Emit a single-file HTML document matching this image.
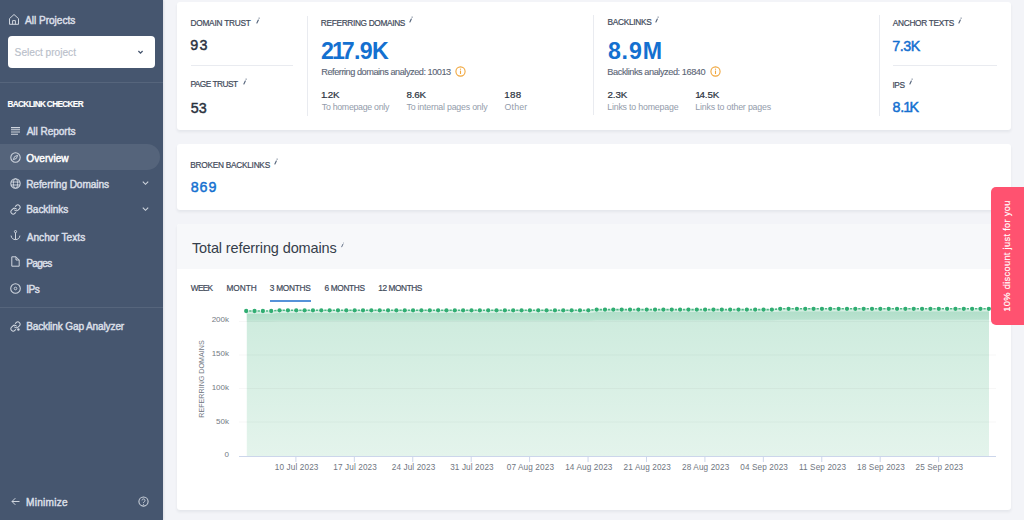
<!DOCTYPE html><html><head><meta charset="utf-8"><style>
*{margin:0;padding:0;box-sizing:border-box}
html,body{width:1024px;height:520px;overflow:hidden;background:#f3f4f8;font-family:"Liberation Sans",sans-serif}
.t{position:absolute;white-space:nowrap;line-height:1}
.abs{position:absolute}
</style></head><body>
<div class="abs" style="left:0;top:0;width:163px;height:520px;background:#46566f;box-shadow:1px 0 2px rgba(30,40,60,0.10)"></div>
<div class="abs" style="left:0;top:144px;width:160px;height:26px;background:#55647b;border-radius:0 13px 13px 0"></div>
<div class="abs" style="left:0;top:82px;width:163px;height:1px;background:#56657c"></div>
<div class="abs" style="left:0;top:306.5px;width:163px;height:1px;background:#56657c"></div>
<div class="abs" style="left:8px;top:36px;width:147px;height:32px;background:#fff;border-radius:4px"></div>
<svg class="abs" style="left:136.35px;top:48.2px" width="9" height="8" viewBox="0 0 9 8"><path d="M2.4 3 L4.5 5.1 L6.6 3" fill="none" stroke="#46566f" stroke-width="1.3"/></svg>
<svg class="abs" style="left:8px;top:13px" width="12" height="13" viewBox="0 0 12 13"><path d="M1.5 11.3 V5.6 L6 1.5 L10.5 5.6 V11.3 Z M4.6 11.3 V7.6 H7.4 V11.3" fill="none" stroke="#cfd5de" stroke-width="1.0" stroke-linejoin="round"/></svg>
<svg class="abs" style="left:10px;top:125.60px" width="11" height="11" viewBox="0 0 11 11"><path d="M1 1.6h9M1 3.8h9M1 6h9M1 8.2h7" stroke="#cfd5de" stroke-width="1.05" fill="none"/></svg>
<svg class="abs" style="left:10px;top:151.60px" width="11" height="11" viewBox="0 0 11 11"><circle cx="5.5" cy="5.5" r="4.7" stroke="#cfd5de" stroke-width="1.05" fill="none"/><path d="M7.7 3.3 L6.4 6.4 L3.3 7.7 L4.6 4.6 Z" stroke="#cfd5de" stroke-width="0.95" fill="none" stroke-linejoin="round"/></svg>
<svg class="abs" style="left:10px;top:177.90px" width="11" height="11" viewBox="0 0 11 11"><circle cx="5.5" cy="5.5" r="4.7" stroke="#cfd5de" stroke-width="1.05" fill="none"/><ellipse cx="5.5" cy="5.5" rx="2.1" ry="4.7" stroke="#cfd5de" stroke-width="0.95" fill="none"/><path d="M1 4h9M1 7h9" stroke="#cfd5de" stroke-width="0.95" fill="none"/></svg>
<svg class="abs" style="left:10px;top:203.50px" width="11" height="11" viewBox="0 0 11 11"><g transform="scale(0.4583)"><path d="M10 13a5 5 0 0 0 7.54.54l3-3a5 5 0 0 0-7.07-7.07l-1.72 1.71" stroke="#cfd5de" stroke-width="2.2" fill="none" stroke-linecap="round"/><path d="M14 11a5 5 0 0 0-7.54-.54l-3 3a5 5 0 0 0 7.07 7.07l1.71-1.71" stroke="#cfd5de" stroke-width="2.2" fill="none" stroke-linecap="round"/></g></svg>
<svg class="abs" style="left:10px;top:230.10px" width="11" height="11" viewBox="0 0 11 11"><circle cx="5.5" cy="1.6" r="1.1" stroke="#cfd5de" stroke-width="0.95" fill="none"/><path d="M5.5 2.7 V9.6 M1.1 5.6 c0.2 2.6 2 4 4.4 4 s4.2 -1.4 4.4 -4" stroke="#cfd5de" stroke-width="1.0" fill="none"/></svg>
<svg class="abs" style="left:10px;top:256.00px" width="11" height="11" viewBox="0 0 11 11"><path d="M1.8 0.8 H6 L9.2 4.0 V10.2 H1.8 Z M6 0.8 V4.0 H9.2" stroke="#cfd5de" stroke-width="1.0" fill="none" stroke-linejoin="round"/></svg>
<svg class="abs" style="left:10px;top:283.10px" width="11" height="11" viewBox="0 0 11 11"><circle cx="5.5" cy="5.5" r="4.8" stroke="#cfd5de" stroke-width="1.05" fill="none"/><circle cx="5.5" cy="5.5" r="1.3" stroke="#cfd5de" stroke-width="0.9" fill="none"/></svg>
<svg class="abs" style="left:10px;top:320.8px" width="11" height="11" viewBox="0 0 11 11"><g transform="scale(0.4583)"><path d="M10 13a5 5 0 0 0 7.54.54l3-3a5 5 0 0 0-7.07-7.07l-1.72 1.71" stroke="#cfd5de" stroke-width="2.2" fill="none" stroke-linecap="round"/><path d="M14 11a5 5 0 0 0-7.54-.54l-3 3a5 5 0 0 0 7.07 7.07l1.71-1.71" stroke="#cfd5de" stroke-width="2.2" fill="none" stroke-linecap="round"/></g></svg>
<svg class="abs" style="left:16px;top:327px" width="4" height="4" viewBox="0 0 4 4"><circle cx="2.4" cy="2.5" r="1.2" fill="#cfd5de"/></svg>
<svg class="abs" style="left:141px;top:179.30px" width="9" height="8" viewBox="0 0 9 8"><path d="M1.8 2.6 L4.5 5.3 L7.2 2.6" fill="none" stroke="#cfd5de" stroke-width="1.1"/></svg>
<svg class="abs" style="left:141px;top:205.30px" width="9" height="8" viewBox="0 0 9 8"><path d="M1.8 2.6 L4.5 5.3 L7.2 2.6" fill="none" stroke="#cfd5de" stroke-width="1.1"/></svg>
<svg class="abs" style="left:10px;top:496px" width="11" height="11" viewBox="0 0 11 11"><path d="M9.5 5.5 H2 M5.3 2.2 L2 5.5 L5.3 8.8" stroke="#cfd5de" stroke-width="1.0" fill="none"/></svg>
<svg class="abs" style="left:138.2px;top:495.7px" width="11" height="11" viewBox="0 0 11 11"><circle cx="5.5" cy="5.5" r="4.6" stroke="#cfd5de" stroke-width="1.05" fill="none"/><path d="M4.0 4.4 a1.5 1.5 0 1 1 2.3 1.3 c-0.6 0.35 -0.8 0.7 -0.8 1.3" stroke="#cfd5de" stroke-width="0.95" fill="none"/><circle cx="5.5" cy="8.2" r="0.55" fill="#cfd5de"/></svg>
<div class="abs" style="left:177px;top:2px;width:834px;height:128px;background:#fff;border-radius:3px;box-shadow:0 2px 3px rgba(40,50,75,0.07)"></div>
<div class="abs" style="left:177px;top:144px;width:834px;height:66px;background:#fff;border-radius:3px;box-shadow:0 2px 3px rgba(40,50,75,0.07)"></div>
<div class="abs" style="left:177px;top:224px;width:834px;height:285.5px;background:#fff;border-radius:3px;box-shadow:0 2px 3px rgba(40,50,75,0.07);overflow:hidden"><div class="abs" style="left:0;top:0;width:834px;height:44.5px;background:#f7f8fa"></div></div>
<div class="abs" style="left:191px;top:65px;width:102px;height:1px;background:#e9ebf0"></div>
<div class="abs" style="left:307px;top:16px;width:1px;height:100px;background:#e9ebf0"></div>
<div class="abs" style="left:593px;top:15px;width:1px;height:100px;background:#e9ebf0"></div>
<div class="abs" style="left:879px;top:15px;width:1px;height:101px;background:#e9ebf0"></div>
<div class="abs" style="left:893px;top:65px;width:104px;height:1px;background:#e9ebf0"></div>
<div class="abs" style="left:270px;top:299.5px;width:41px;height:2px;background:#5592d9"></div>
<svg class="abs" style="left:255.70px;top:16.50px" width="4.0" height="7.0" viewBox="0 0 4 7"><path d="M0.9 6.0 L2.3 3.0" stroke="#56657c" stroke-width="1.15" stroke-linecap="round" fill="none"/><circle cx="3.1" cy="1.1" r="0.62" fill="#56657c"/></svg>
<svg class="abs" style="left:242.70px;top:78.00px" width="4.0" height="7.0" viewBox="0 0 4 7"><path d="M0.9 6.0 L2.3 3.0" stroke="#56657c" stroke-width="1.15" stroke-linecap="round" fill="none"/><circle cx="3.1" cy="1.1" r="0.62" fill="#56657c"/></svg>
<svg class="abs" style="left:409.00px;top:16.10px" width="4.0" height="7.0" viewBox="0 0 4 7"><path d="M0.9 6.0 L2.3 3.0" stroke="#56657c" stroke-width="1.15" stroke-linecap="round" fill="none"/><circle cx="3.1" cy="1.1" r="0.62" fill="#56657c"/></svg>
<svg class="abs" style="left:655.10px;top:16.20px" width="4.0" height="7.0" viewBox="0 0 4 7"><path d="M0.9 6.0 L2.3 3.0" stroke="#56657c" stroke-width="1.15" stroke-linecap="round" fill="none"/><circle cx="3.1" cy="1.1" r="0.62" fill="#56657c"/></svg>
<svg class="abs" style="left:957.70px;top:17.00px" width="4.0" height="7.0" viewBox="0 0 4 7"><path d="M0.9 6.0 L2.3 3.0" stroke="#56657c" stroke-width="1.15" stroke-linecap="round" fill="none"/><circle cx="3.1" cy="1.1" r="0.62" fill="#56657c"/></svg>
<svg class="abs" style="left:908.70px;top:78.30px" width="4.0" height="7.0" viewBox="0 0 4 7"><path d="M0.9 6.0 L2.3 3.0" stroke="#56657c" stroke-width="1.15" stroke-linecap="round" fill="none"/><circle cx="3.1" cy="1.1" r="0.62" fill="#56657c"/></svg>
<svg class="abs" style="left:273.60px;top:158.30px" width="4.0" height="7.0" viewBox="0 0 4 7"><path d="M0.9 6.0 L2.3 3.0" stroke="#56657c" stroke-width="1.15" stroke-linecap="round" fill="none"/><circle cx="3.1" cy="1.1" r="0.62" fill="#56657c"/></svg>
<svg class="abs" style="left:341.00px;top:242.20px" width="3.2" height="5.6" viewBox="0 0 4 7"><path d="M0.9 6.0 L2.3 3.0" stroke="#56657c" stroke-width="1.15" stroke-linecap="round" fill="none"/><circle cx="3.1" cy="1.1" r="0.62" fill="#56657c"/></svg>
<svg class="abs" style="left:454.5px;top:65.7px" width="11" height="11" viewBox="0 0 11 11"><circle cx="5.5" cy="5.5" r="4.6" stroke="#f0a63c" stroke-width="1.1" fill="none"/><path d="M5.5 4.6 V8" stroke="#f0a63c" stroke-width="1.1"/><circle cx="5.5" cy="3.2" r="0.6" fill="#f0a63c"/></svg>
<svg class="abs" style="left:709.5px;top:65.7px" width="11" height="11" viewBox="0 0 11 11"><circle cx="5.5" cy="5.5" r="4.6" stroke="#f0a63c" stroke-width="1.1" fill="none"/><path d="M5.5 4.6 V8" stroke="#f0a63c" stroke-width="1.1"/><circle cx="5.5" cy="3.2" r="0.6" fill="#f0a63c"/></svg>
<div class="t" id="selproj" style="left:14.62px;top:48.12px;font-size:10.2px;font-weight:400;color:#b9c0ca;letter-spacing:-0.024px;-webkit-text-stroke:0.15px #b9c0ca">Select project</div>
<div class="t" id="allproj" style="left:25.00px;top:15.77px;font-size:10.1px;font-weight:400;color:#dadfe7;letter-spacing:-0.023px;-webkit-text-stroke:0.45px #dadfe7">All Projects</div>
<div class="t" id="bc" style="left:7.54px;top:100.72px;font-size:8.2px;font-weight:700;color:#ffffff;letter-spacing:-0.633px;-webkit-text-stroke:0.15px #ffffff">BACKLINK CHECKER</div>
<div class="t" id="m0" style="left:26.68px;top:127.02px;font-size:10.1px;font-weight:400;color:#dadfe7;letter-spacing:-0.061px;-webkit-text-stroke:0.45px #dadfe7">All Reports</div>
<div class="t" id="m1" style="left:26.36px;top:153.60px;font-size:10.1px;font-weight:400;color:#ffffff;letter-spacing:0.029px;-webkit-text-stroke:0.45px #ffffff">Overview</div>
<div class="t" id="m2" style="left:26.15px;top:179.67px;font-size:10.1px;font-weight:400;color:#dadfe7;letter-spacing:-0.080px;-webkit-text-stroke:0.45px #dadfe7">Referring Domains</div>
<div class="t" id="m3" style="left:26.13px;top:205.44px;font-size:10.1px;font-weight:400;color:#dadfe7;letter-spacing:-0.048px;-webkit-text-stroke:0.45px #dadfe7">Backlinks</div>
<div class="t" id="m4" style="left:26.68px;top:232.60px;font-size:10.1px;font-weight:400;color:#dadfe7;letter-spacing:0.033px;-webkit-text-stroke:0.45px #dadfe7">Anchor Texts</div>
<div class="t" id="m5" style="left:26.15px;top:258.63px;font-size:10.1px;font-weight:400;color:#dadfe7;letter-spacing:-0.601px;-webkit-text-stroke:0.45px #dadfe7">Pages</div>
<div class="t" id="m6" style="left:26.14px;top:285.08px;font-size:10.1px;font-weight:400;color:#dadfe7;letter-spacing:-0.504px;-webkit-text-stroke:0.45px #dadfe7">IPs</div>
<div class="t" id="gap" style="left:26.16px;top:321.89px;font-size:10.1px;font-weight:400;color:#dadfe7;letter-spacing:-0.146px;-webkit-text-stroke:0.45px #dadfe7">Backlink Gap Analyzer</div>
<div class="t" id="min" style="left:26.10px;top:498.29px;font-size:10.1px;font-weight:400;color:#dadfe7;letter-spacing:0.255px;-webkit-text-stroke:0.45px #dadfe7">Minimize</div>
<div class="t" id="dt" style="left:190.44px;top:18.68px;font-size:8.3px;font-weight:400;color:#3f4a5a;letter-spacing:-0.235px;-webkit-text-stroke:0.2px #3f4a5a">DOMAIN TRUST</div>
<div class="t" id="n93" style="left:190.37px;top:38.46px;font-size:14.3px;font-weight:400;color:#2a323e;letter-spacing:1.265px;-webkit-text-stroke:0.45px #2a323e">93</div>
<div class="t" id="pt" style="left:190.43px;top:80.38px;font-size:8.3px;font-weight:400;color:#3f4a5a;letter-spacing:-0.500px;-webkit-text-stroke:0.2px #3f4a5a">PAGE TRUST</div>
<div class="t" id="n53" style="left:190.71px;top:100.57px;font-size:14.3px;font-weight:400;color:#2a323e;letter-spacing:0.000px;-webkit-text-stroke:0.45px #2a323e">53</div>
<div class="t" id="rd" style="left:320.87px;top:18.68px;font-size:8.3px;font-weight:400;color:#3f4a5a;letter-spacing:-0.338px;-webkit-text-stroke:0.2px #3f4a5a">REFERRING DOMAINS</div>
<div class="t" id="n217" style="left:321.10px;top:39.54px;font-size:23.2px;font-weight:700;color:#1470d0;letter-spacing:-0.605px;">2<span style="margin-left:-1.5px;margin-right:-2.5px">1</span>7.9K</div>
<div class="t" id="rda" style="left:321.33px;top:67.79px;font-size:9.2px;font-weight:400;color:#5c6676;letter-spacing:-0.474px;-webkit-text-stroke:0.12px #5c6676">Referring domains analyzed: 10013</div>
<div class="t" id="n12" style="left:321.11px;top:89.68px;font-size:9.8px;font-weight:400;color:#2a323e;letter-spacing:-0.149px;-webkit-text-stroke:0.2px #2a323e"><span style="margin-right:-1.2px">1</span>.2K</div>
<div class="t" id="thp" style="left:321.79px;top:103.29px;font-size:8.8px;font-weight:400;color:#939cab;letter-spacing:-0.291px;">To homepage only</div>
<div class="t" id="n86" style="left:406.47px;top:90.16px;font-size:9.8px;font-weight:400;color:#2a323e;letter-spacing:-0.155px;-webkit-text-stroke:0.2px #2a323e">8.6K</div>
<div class="t" id="tip" style="left:406.48px;top:103.32px;font-size:8.8px;font-weight:400;color:#939cab;letter-spacing:-0.209px;">To internal pages only</div>
<div class="t" id="n188" style="left:504.35px;top:89.75px;font-size:9.8px;font-weight:400;color:#2a323e;letter-spacing:0.193px;-webkit-text-stroke:0.2px #2a323e">188</div>
<div class="t" id="oth" style="left:504.47px;top:103.30px;font-size:8.8px;font-weight:400;color:#939cab;letter-spacing:0.204px;">Other</div>
<div class="t" id="bl" style="left:607.43px;top:18.39px;font-size:8.3px;font-weight:400;color:#3f4a5a;letter-spacing:-0.263px;-webkit-text-stroke:0.2px #3f4a5a">BACKLINKS</div>
<div class="t" id="n89" style="left:607.89px;top:39.54px;font-size:23.2px;font-weight:700;color:#1470d0;letter-spacing:0.853px;">8.9M</div>
<div class="t" id="bla" style="left:607.36px;top:67.57px;font-size:9.2px;font-weight:400;color:#5c6676;letter-spacing:-0.438px;-webkit-text-stroke:0.12px #5c6676">Backlinks analyzed: 16840</div>
<div class="t" id="n23" style="left:607.53px;top:90.35px;font-size:9.8px;font-weight:400;color:#2a323e;letter-spacing:-0.093px;-webkit-text-stroke:0.2px #2a323e">2.3K</div>
<div class="t" id="lth" style="left:607.20px;top:103.31px;font-size:8.8px;font-weight:400;color:#939cab;letter-spacing:-0.183px;">Links to homepage</div>
<div class="t" id="n145" style="left:695.20px;top:90.06px;font-size:9.8px;font-weight:400;color:#2a323e;letter-spacing:-0.117px;-webkit-text-stroke:0.2px #2a323e"><span style="margin-right:-1px">1</span>4.5K</div>
<div class="t" id="lto" style="left:695.20px;top:103.46px;font-size:8.8px;font-weight:400;color:#939cab;letter-spacing:-0.170px;">Links to other pages</div>
<div class="t" id="at" style="left:892.75px;top:18.98px;font-size:8.3px;font-weight:400;color:#3f4a5a;letter-spacing:-0.296px;-webkit-text-stroke:0.2px #3f4a5a">ANCHOR TEXTS</div>
<div class="t" id="n73" style="left:892.23px;top:38.52px;font-size:14.3px;font-weight:400;color:#1470d0;letter-spacing:-0.470px;-webkit-text-stroke:0.45px #1470d0">7.3K</div>
<div class="t" id="ips" style="left:892.49px;top:80.98px;font-size:8.3px;font-weight:400;color:#3f4a5a;letter-spacing:-0.459px;-webkit-text-stroke:0.2px #3f4a5a">IPS</div>
<div class="t" id="n81" style="left:892.41px;top:100.26px;font-size:14.3px;font-weight:400;color:#1470d0;letter-spacing:-0.177px;-webkit-text-stroke:0.45px #1470d0">8.<span style="margin-left:-0.8px;margin-right:-1.6px">1</span>K</div>
<div class="t" id="bb" style="left:190.36px;top:160.83px;font-size:8.3px;font-weight:400;color:#3f4a5a;letter-spacing:-0.274px;-webkit-text-stroke:0.2px #3f4a5a">BROKEN BACKLINKS</div>
<div class="t" id="n869" style="left:190.75px;top:180.25px;font-size:14.3px;font-weight:400;color:#1470d0;letter-spacing:0.886px;-webkit-text-stroke:0.45px #1470d0">869</div>
<div class="t" id="title" style="left:191.91px;top:240.81px;font-size:14.5px;font-weight:400;color:#353e4b;letter-spacing:-0.118px;">Total referring domains</div>
<div class="t" id="tw" style="left:190.83px;top:283.89px;font-size:8.3px;font-weight:400;color:#3f4a5a;letter-spacing:-0.710px;-webkit-text-stroke:0.2px #3f4a5a">WEEK</div>
<div class="t" id="tm" style="left:226.50px;top:283.98px;font-size:8.3px;font-weight:400;color:#3f4a5a;letter-spacing:-0.061px;-webkit-text-stroke:0.2px #3f4a5a">MONTH</div>
<div class="t" id="t3" style="left:269.86px;top:283.98px;font-size:8.3px;font-weight:400;color:#3f4a5a;letter-spacing:-0.277px;-webkit-text-stroke:0.2px #3f4a5a">3 MONTHS</div>
<div class="t" id="t6" style="left:324.43px;top:283.98px;font-size:8.3px;font-weight:400;color:#3f4a5a;letter-spacing:-0.327px;-webkit-text-stroke:0.2px #3f4a5a">6 MONTHS</div>
<div class="t" id="t12" style="left:378.32px;top:283.96px;font-size:8.3px;font-weight:400;color:#3f4a5a;letter-spacing:-0.428px;-webkit-text-stroke:0.2px #3f4a5a">12 MONTHS</div>
<svg class="abs" style="left:0;top:0" width="1024" height="520" viewBox="0 0 1024 520"><defs><linearGradient id="g" x1="0" y1="0" x2="0" y2="1"><stop offset="0" stop-color="#cdebdd"/><stop offset="1" stop-color="#e4f4ec"/></linearGradient><linearGradient id="bandg" x1="0" y1="0" x2="0" y2="1"><stop offset="0" stop-color="#acdcc6" stop-opacity="0.85"/><stop offset="0.75" stop-color="#acdcc6" stop-opacity="0.6"/><stop offset="1" stop-color="#acdcc6" stop-opacity="0.1"/></linearGradient></defs><polygon points="246.8,456 246.8,313.50 246.20,313.50 254.54,313.50 262.89,313.50 271.23,313.50 279.58,312.80 287.92,312.80 296.26,312.80 304.61,312.80 312.95,312.80 321.30,312.80 329.64,312.80 337.98,312.80 346.33,312.80 354.67,312.80 363.02,312.80 371.36,312.80 379.70,312.80 388.05,312.80 396.39,312.80 404.74,312.80 413.08,312.80 421.42,312.80 429.77,312.80 438.11,312.80 446.46,312.80 454.80,312.80 463.14,312.80 471.49,312.80 479.83,312.80 488.18,312.80 496.52,312.80 504.86,312.80 513.21,312.80 521.55,312.80 529.90,312.80 538.24,312.80 546.58,312.80 554.93,312.80 563.27,312.80 571.62,312.80 579.96,312.80 588.30,312.80 596.65,312.10 604.99,312.10 613.34,312.10 621.68,312.10 630.02,312.10 638.37,312.10 646.71,312.10 655.06,312.10 663.40,312.10 671.74,312.10 680.09,312.10 688.43,312.10 696.78,312.10 705.12,312.10 713.46,312.10 721.81,312.10 730.15,312.10 738.50,312.10 746.84,312.10 755.18,312.10 763.53,312.10 771.87,312.10 780.22,311.30 788.56,311.30 796.90,311.30 805.25,311.30 813.59,311.30 821.94,311.30 830.28,311.30 838.62,311.30 846.97,311.30 855.31,311.30 863.66,311.30 872.00,311.30 880.34,311.30 888.69,311.30 897.03,311.30 905.38,311.30 913.72,311.30 922.06,311.30 930.41,311.30 938.75,311.30 947.10,311.30 955.44,311.30 963.78,311.30 972.13,311.30 980.47,311.30 988.82,311.30 989,311.30 989,456" fill="url(#g)"/><polygon points="246.8,313.50 246.20,313.50 254.54,313.50 262.89,313.50 271.23,313.50 279.58,312.80 287.92,312.80 296.26,312.80 304.61,312.80 312.95,312.80 321.30,312.80 329.64,312.80 337.98,312.80 346.33,312.80 354.67,312.80 363.02,312.80 371.36,312.80 379.70,312.80 388.05,312.80 396.39,312.80 404.74,312.80 413.08,312.80 421.42,312.80 429.77,312.80 438.11,312.80 446.46,312.80 454.80,312.80 463.14,312.80 471.49,312.80 479.83,312.80 488.18,312.80 496.52,312.80 504.86,312.80 513.21,312.80 521.55,312.80 529.90,312.80 538.24,312.80 546.58,312.80 554.93,312.80 563.27,312.80 571.62,312.80 579.96,312.80 588.30,312.80 596.65,312.10 604.99,312.10 613.34,312.10 621.68,312.10 630.02,312.10 638.37,312.10 646.71,312.10 655.06,312.10 663.40,312.10 671.74,312.10 680.09,312.10 688.43,312.10 696.78,312.10 705.12,312.10 713.46,312.10 721.81,312.10 730.15,312.10 738.50,312.10 746.84,312.10 755.18,312.10 763.53,312.10 771.87,312.10 780.22,311.30 788.56,311.30 796.90,311.30 805.25,311.30 813.59,311.30 821.94,311.30 830.28,311.30 838.62,311.30 846.97,311.30 855.31,311.30 863.66,311.30 872.00,311.30 880.34,311.30 888.69,311.30 897.03,311.30 905.38,311.30 913.72,311.30 922.06,311.30 930.41,311.30 938.75,311.30 947.10,311.30 955.44,311.30 963.78,311.30 972.13,311.30 980.47,311.30 988.82,311.30 989,311.30 989,319.80 988.82,319.80 980.47,319.80 972.13,319.80 963.78,319.80 955.44,319.80 947.10,319.80 938.75,319.80 930.41,319.80 922.06,319.80 913.72,319.80 905.38,319.80 897.03,319.80 888.69,319.80 880.34,319.80 872.00,319.80 863.66,319.80 855.31,319.80 846.97,319.80 838.62,319.80 830.28,319.80 821.94,319.80 813.59,319.80 805.25,319.80 796.90,319.80 788.56,319.80 780.22,319.80 771.87,320.60 763.53,320.60 755.18,320.60 746.84,320.60 738.50,320.60 730.15,320.60 721.81,320.60 713.46,320.60 705.12,320.60 696.78,320.60 688.43,320.60 680.09,320.60 671.74,320.60 663.40,320.60 655.06,320.60 646.71,320.60 638.37,320.60 630.02,320.60 621.68,320.60 613.34,320.60 604.99,320.60 596.65,320.60 588.30,321.30 579.96,321.30 571.62,321.30 563.27,321.30 554.93,321.30 546.58,321.30 538.24,321.30 529.90,321.30 521.55,321.30 513.21,321.30 504.86,321.30 496.52,321.30 488.18,321.30 479.83,321.30 471.49,321.30 463.14,321.30 454.80,321.30 446.46,321.30 438.11,321.30 429.77,321.30 421.42,321.30 413.08,321.30 404.74,321.30 396.39,321.30 388.05,321.30 379.70,321.30 371.36,321.30 363.02,321.30 354.67,321.30 346.33,321.30 337.98,321.30 329.64,321.30 321.30,321.30 312.95,321.30 304.61,321.30 296.26,321.30 287.92,321.30 279.58,321.30 271.23,322.00 262.89,322.00 254.54,322.00 246.20,322.00 246.8,322.00" fill="url(#bandg)"/><polygon points="246.8,311.50 246.20,311.50 254.54,311.50 262.89,311.50 271.23,311.50 279.58,310.80 287.92,310.80 296.26,310.80 304.61,310.80 312.95,310.80 321.30,310.80 329.64,310.80 337.98,310.80 346.33,310.80 354.67,310.80 363.02,310.80 371.36,310.80 379.70,310.80 388.05,310.80 396.39,310.80 404.74,310.80 413.08,310.80 421.42,310.80 429.77,310.80 438.11,310.80 446.46,310.80 454.80,310.80 463.14,310.80 471.49,310.80 479.83,310.80 488.18,310.80 496.52,310.80 504.86,310.80 513.21,310.80 521.55,310.80 529.90,310.80 538.24,310.80 546.58,310.80 554.93,310.80 563.27,310.80 571.62,310.80 579.96,310.80 588.30,310.80 596.65,310.10 604.99,310.10 613.34,310.10 621.68,310.10 630.02,310.10 638.37,310.10 646.71,310.10 655.06,310.10 663.40,310.10 671.74,310.10 680.09,310.10 688.43,310.10 696.78,310.10 705.12,310.10 713.46,310.10 721.81,310.10 730.15,310.10 738.50,310.10 746.84,310.10 755.18,310.10 763.53,310.10 771.87,310.10 780.22,309.30 788.56,309.30 796.90,309.30 805.25,309.30 813.59,309.30 821.94,309.30 830.28,309.30 838.62,309.30 846.97,309.30 855.31,309.30 863.66,309.30 872.00,309.30 880.34,309.30 888.69,309.30 897.03,309.30 905.38,309.30 913.72,309.30 922.06,309.30 930.41,309.30 938.75,309.30 947.10,309.30 955.44,309.30 963.78,309.30 972.13,309.30 980.47,309.30 988.82,309.30 989,309.30 989,311.30 988.82,311.30 980.47,311.30 972.13,311.30 963.78,311.30 955.44,311.30 947.10,311.30 938.75,311.30 930.41,311.30 922.06,311.30 913.72,311.30 905.38,311.30 897.03,311.30 888.69,311.30 880.34,311.30 872.00,311.30 863.66,311.30 855.31,311.30 846.97,311.30 838.62,311.30 830.28,311.30 821.94,311.30 813.59,311.30 805.25,311.30 796.90,311.30 788.56,311.30 780.22,311.30 771.87,312.10 763.53,312.10 755.18,312.10 746.84,312.10 738.50,312.10 730.15,312.10 721.81,312.10 713.46,312.10 705.12,312.10 696.78,312.10 688.43,312.10 680.09,312.10 671.74,312.10 663.40,312.10 655.06,312.10 646.71,312.10 638.37,312.10 630.02,312.10 621.68,312.10 613.34,312.10 604.99,312.10 596.65,312.10 588.30,312.80 579.96,312.80 571.62,312.80 563.27,312.80 554.93,312.80 546.58,312.80 538.24,312.80 529.90,312.80 521.55,312.80 513.21,312.80 504.86,312.80 496.52,312.80 488.18,312.80 479.83,312.80 471.49,312.80 463.14,312.80 454.80,312.80 446.46,312.80 438.11,312.80 429.77,312.80 421.42,312.80 413.08,312.80 404.74,312.80 396.39,312.80 388.05,312.80 379.70,312.80 371.36,312.80 363.02,312.80 354.67,312.80 346.33,312.80 337.98,312.80 329.64,312.80 321.30,312.80 312.95,312.80 304.61,312.80 296.26,312.80 287.92,312.80 279.58,312.80 271.23,313.50 262.89,313.50 254.54,313.50 246.20,313.50 246.8,313.50" fill="#d6eee3"/><line x1="239" y1="321.5" x2="996" y2="321.5" stroke="#000" stroke-width="1" opacity="0.028"/><line x1="239" y1="355" x2="996" y2="355" stroke="#000" stroke-width="1" opacity="0.028"/><line x1="239" y1="388.5" x2="996" y2="388.5" stroke="#000" stroke-width="1" opacity="0.028"/><line x1="239" y1="422" x2="996" y2="422" stroke="#000" stroke-width="1" opacity="0.028"/><polyline points="246.20,311.00 254.54,311.00 262.89,311.00 271.23,311.00 279.58,310.30 287.92,310.30 296.26,310.30 304.61,310.30 312.95,310.30 321.30,310.30 329.64,310.30 337.98,310.30 346.33,310.30 354.67,310.30 363.02,310.30 371.36,310.30 379.70,310.30 388.05,310.30 396.39,310.30 404.74,310.30 413.08,310.30 421.42,310.30 429.77,310.30 438.11,310.30 446.46,310.30 454.80,310.30 463.14,310.30 471.49,310.30 479.83,310.30 488.18,310.30 496.52,310.30 504.86,310.30 513.21,310.30 521.55,310.30 529.90,310.30 538.24,310.30 546.58,310.30 554.93,310.30 563.27,310.30 571.62,310.30 579.96,310.30 588.30,310.30 596.65,309.60 604.99,309.60 613.34,309.60 621.68,309.60 630.02,309.60 638.37,309.60 646.71,309.60 655.06,309.60 663.40,309.60 671.74,309.60 680.09,309.60 688.43,309.60 696.78,309.60 705.12,309.60 713.46,309.60 721.81,309.60 730.15,309.60 738.50,309.60 746.84,309.60 755.18,309.60 763.53,309.60 771.87,309.60 780.22,308.80 788.56,308.80 796.90,308.80 805.25,308.80 813.59,308.80 821.94,308.80 830.28,308.80 838.62,308.80 846.97,308.80 855.31,308.80 863.66,308.80 872.00,308.80 880.34,308.80 888.69,308.80 897.03,308.80 905.38,308.80 913.72,308.80 922.06,308.80 930.41,308.80 938.75,308.80 947.10,308.80 955.44,308.80 963.78,308.80 972.13,308.80 980.47,308.80 988.82,308.80" fill="none" stroke="#4cb884" stroke-width="1.6" stroke-dasharray="2.4 5.944" stroke-dashoffset="5.372"/><circle cx="246.20" cy="311.00" r="2.15" fill="#30ad72"/><circle cx="254.54" cy="311.00" r="2.15" fill="#30ad72"/><circle cx="262.89" cy="311.00" r="2.15" fill="#30ad72"/><circle cx="271.23" cy="311.00" r="2.15" fill="#30ad72"/><circle cx="279.58" cy="310.30" r="2.15" fill="#30ad72"/><circle cx="287.92" cy="310.30" r="2.15" fill="#30ad72"/><circle cx="296.26" cy="310.30" r="2.15" fill="#30ad72"/><circle cx="304.61" cy="310.30" r="2.15" fill="#30ad72"/><circle cx="312.95" cy="310.30" r="2.15" fill="#30ad72"/><circle cx="321.30" cy="310.30" r="2.15" fill="#30ad72"/><circle cx="329.64" cy="310.30" r="2.15" fill="#30ad72"/><circle cx="337.98" cy="310.30" r="2.15" fill="#30ad72"/><circle cx="346.33" cy="310.30" r="2.15" fill="#30ad72"/><circle cx="354.67" cy="310.30" r="2.15" fill="#30ad72"/><circle cx="363.02" cy="310.30" r="2.15" fill="#30ad72"/><circle cx="371.36" cy="310.30" r="2.15" fill="#30ad72"/><circle cx="379.70" cy="310.30" r="2.15" fill="#30ad72"/><circle cx="388.05" cy="310.30" r="2.15" fill="#30ad72"/><circle cx="396.39" cy="310.30" r="2.15" fill="#30ad72"/><circle cx="404.74" cy="310.30" r="2.15" fill="#30ad72"/><circle cx="413.08" cy="310.30" r="2.15" fill="#30ad72"/><circle cx="421.42" cy="310.30" r="2.15" fill="#30ad72"/><circle cx="429.77" cy="310.30" r="2.15" fill="#30ad72"/><circle cx="438.11" cy="310.30" r="2.15" fill="#30ad72"/><circle cx="446.46" cy="310.30" r="2.15" fill="#30ad72"/><circle cx="454.80" cy="310.30" r="2.15" fill="#30ad72"/><circle cx="463.14" cy="310.30" r="2.15" fill="#30ad72"/><circle cx="471.49" cy="310.30" r="2.15" fill="#30ad72"/><circle cx="479.83" cy="310.30" r="2.15" fill="#30ad72"/><circle cx="488.18" cy="310.30" r="2.15" fill="#30ad72"/><circle cx="496.52" cy="310.30" r="2.15" fill="#30ad72"/><circle cx="504.86" cy="310.30" r="2.15" fill="#30ad72"/><circle cx="513.21" cy="310.30" r="2.15" fill="#30ad72"/><circle cx="521.55" cy="310.30" r="2.15" fill="#30ad72"/><circle cx="529.90" cy="310.30" r="2.15" fill="#30ad72"/><circle cx="538.24" cy="310.30" r="2.15" fill="#30ad72"/><circle cx="546.58" cy="310.30" r="2.15" fill="#30ad72"/><circle cx="554.93" cy="310.30" r="2.15" fill="#30ad72"/><circle cx="563.27" cy="310.30" r="2.15" fill="#30ad72"/><circle cx="571.62" cy="310.30" r="2.15" fill="#30ad72"/><circle cx="579.96" cy="310.30" r="2.15" fill="#30ad72"/><circle cx="588.30" cy="310.30" r="2.15" fill="#30ad72"/><circle cx="596.65" cy="309.60" r="2.15" fill="#30ad72"/><circle cx="604.99" cy="309.60" r="2.15" fill="#30ad72"/><circle cx="613.34" cy="309.60" r="2.15" fill="#30ad72"/><circle cx="621.68" cy="309.60" r="2.15" fill="#30ad72"/><circle cx="630.02" cy="309.60" r="2.15" fill="#30ad72"/><circle cx="638.37" cy="309.60" r="2.15" fill="#30ad72"/><circle cx="646.71" cy="309.60" r="2.15" fill="#30ad72"/><circle cx="655.06" cy="309.60" r="2.15" fill="#30ad72"/><circle cx="663.40" cy="309.60" r="2.15" fill="#30ad72"/><circle cx="671.74" cy="309.60" r="2.15" fill="#30ad72"/><circle cx="680.09" cy="309.60" r="2.15" fill="#30ad72"/><circle cx="688.43" cy="309.60" r="2.15" fill="#30ad72"/><circle cx="696.78" cy="309.60" r="2.15" fill="#30ad72"/><circle cx="705.12" cy="309.60" r="2.15" fill="#30ad72"/><circle cx="713.46" cy="309.60" r="2.15" fill="#30ad72"/><circle cx="721.81" cy="309.60" r="2.15" fill="#30ad72"/><circle cx="730.15" cy="309.60" r="2.15" fill="#30ad72"/><circle cx="738.50" cy="309.60" r="2.15" fill="#30ad72"/><circle cx="746.84" cy="309.60" r="2.15" fill="#30ad72"/><circle cx="755.18" cy="309.60" r="2.15" fill="#30ad72"/><circle cx="763.53" cy="309.60" r="2.15" fill="#30ad72"/><circle cx="771.87" cy="309.60" r="2.15" fill="#30ad72"/><circle cx="780.22" cy="308.80" r="2.15" fill="#30ad72"/><circle cx="788.56" cy="308.80" r="2.15" fill="#30ad72"/><circle cx="796.90" cy="308.80" r="2.15" fill="#30ad72"/><circle cx="805.25" cy="308.80" r="2.15" fill="#30ad72"/><circle cx="813.59" cy="308.80" r="2.15" fill="#30ad72"/><circle cx="821.94" cy="308.80" r="2.15" fill="#30ad72"/><circle cx="830.28" cy="308.80" r="2.15" fill="#30ad72"/><circle cx="838.62" cy="308.80" r="2.15" fill="#30ad72"/><circle cx="846.97" cy="308.80" r="2.15" fill="#30ad72"/><circle cx="855.31" cy="308.80" r="2.15" fill="#30ad72"/><circle cx="863.66" cy="308.80" r="2.15" fill="#30ad72"/><circle cx="872.00" cy="308.80" r="2.15" fill="#30ad72"/><circle cx="880.34" cy="308.80" r="2.15" fill="#30ad72"/><circle cx="888.69" cy="308.80" r="2.15" fill="#30ad72"/><circle cx="897.03" cy="308.80" r="2.15" fill="#30ad72"/><circle cx="905.38" cy="308.80" r="2.15" fill="#30ad72"/><circle cx="913.72" cy="308.80" r="2.15" fill="#30ad72"/><circle cx="922.06" cy="308.80" r="2.15" fill="#30ad72"/><circle cx="930.41" cy="308.80" r="2.15" fill="#30ad72"/><circle cx="938.75" cy="308.80" r="2.15" fill="#30ad72"/><circle cx="947.10" cy="308.80" r="2.15" fill="#30ad72"/><circle cx="955.44" cy="308.80" r="2.15" fill="#30ad72"/><circle cx="963.78" cy="308.80" r="2.15" fill="#30ad72"/><circle cx="972.13" cy="308.80" r="2.15" fill="#30ad72"/><circle cx="980.47" cy="308.80" r="2.15" fill="#30ad72"/><circle cx="988.82" cy="308.80" r="2.15" fill="#30ad72"/><line x1="239" y1="456.5" x2="996" y2="456.5" stroke="#ccd6eb" stroke-width="1"/><line x1="295.90" y1="456" x2="295.90" y2="462" stroke="#ccd6eb" stroke-width="1"/><line x1="354.33" y1="456" x2="354.33" y2="462" stroke="#ccd6eb" stroke-width="1"/><line x1="412.76" y1="456" x2="412.76" y2="462" stroke="#ccd6eb" stroke-width="1"/><line x1="471.19" y1="456" x2="471.19" y2="462" stroke="#ccd6eb" stroke-width="1"/><line x1="529.62" y1="456" x2="529.62" y2="462" stroke="#ccd6eb" stroke-width="1"/><line x1="588.05" y1="456" x2="588.05" y2="462" stroke="#ccd6eb" stroke-width="1"/><line x1="646.48" y1="456" x2="646.48" y2="462" stroke="#ccd6eb" stroke-width="1"/><line x1="704.91" y1="456" x2="704.91" y2="462" stroke="#ccd6eb" stroke-width="1"/><line x1="763.34" y1="456" x2="763.34" y2="462" stroke="#ccd6eb" stroke-width="1"/><line x1="821.77" y1="456" x2="821.77" y2="462" stroke="#ccd6eb" stroke-width="1"/><line x1="880.20" y1="456" x2="880.20" y2="462" stroke="#ccd6eb" stroke-width="1"/><line x1="938.63" y1="456" x2="938.63" y2="462" stroke="#ccd6eb" stroke-width="1"/></svg>
<div class="t ax" style="right:795px;top:316px;font-size:8px;color:#737a83">200k</div>
<div class="t ax" style="right:795px;top:350px;font-size:8px;color:#737a83">150k</div>
<div class="t ax" style="right:795px;top:383.5px;font-size:8px;color:#737a83">100k</div>
<div class="t ax" style="right:795px;top:417.5px;font-size:8px;color:#737a83">50k</div>
<div class="t ax" style="right:795px;top:450.7px;font-size:8px;color:#737a83">0</div>
<div class="t ax" style="left:256.70px;width:80px;text-align:center;top:464.00px;font-size:8.2px;color:#70767f;letter-spacing:0.12px">10 Jul 2023</div>
<div class="t ax" style="left:315.13px;width:80px;text-align:center;top:464.00px;font-size:8.2px;color:#70767f;letter-spacing:0.12px">17 Jul 2023</div>
<div class="t ax" style="left:373.56px;width:80px;text-align:center;top:464.00px;font-size:8.2px;color:#70767f;letter-spacing:0.12px">24 Jul 2023</div>
<div class="t ax" style="left:431.99px;width:80px;text-align:center;top:464.00px;font-size:8.2px;color:#70767f;letter-spacing:0.12px">31 Jul 2023</div>
<div class="t ax" style="left:490.42px;width:80px;text-align:center;top:464.00px;font-size:8.2px;color:#70767f;letter-spacing:0.12px">07 Aug 2023</div>
<div class="t ax" style="left:548.85px;width:80px;text-align:center;top:464.00px;font-size:8.2px;color:#70767f;letter-spacing:0.12px">14 Aug 2023</div>
<div class="t ax" style="left:607.28px;width:80px;text-align:center;top:464.00px;font-size:8.2px;color:#70767f;letter-spacing:0.12px">21 Aug 2023</div>
<div class="t ax" style="left:665.71px;width:80px;text-align:center;top:464.00px;font-size:8.2px;color:#70767f;letter-spacing:0.12px">28 Aug 2023</div>
<div class="t ax" style="left:724.14px;width:80px;text-align:center;top:464.00px;font-size:8.2px;color:#70767f;letter-spacing:0.12px">04 Sep 2023</div>
<div class="t ax" style="left:782.57px;width:80px;text-align:center;top:464.00px;font-size:8.2px;color:#70767f;letter-spacing:0.12px">11 Sep 2023</div>
<div class="t ax" style="left:841.00px;width:80px;text-align:center;top:464.00px;font-size:8.2px;color:#70767f;letter-spacing:0.12px">18 Sep 2023</div>
<div class="t ax" style="left:899.43px;width:80px;text-align:center;top:464.00px;font-size:8.2px;color:#70767f;letter-spacing:0.12px">25 Sep 2023</div>
<div class="t ax" style="left:162.7px;top:374.75px;width:80px;text-align:center;font-size:7.15px;color:#6f767f;transform:rotate(-90deg);transform-origin:40px 4px">REFERRING DOMAINS</div>
<div class="abs" style="left:991px;top:187px;width:33px;height:138px;background:#ff5270;border-radius:5px 0 0 5px"></div>
<div class="t" id="disc" style="left:948.2px;top:251px;width:120px;text-align:center;font-size:9.3px;color:#fff;-webkit-text-stroke:0.15px #fff;letter-spacing:0.3px;transform:rotate(-90deg);transform-origin:60px 5px">10% discount just for you</div>
</body></html>
